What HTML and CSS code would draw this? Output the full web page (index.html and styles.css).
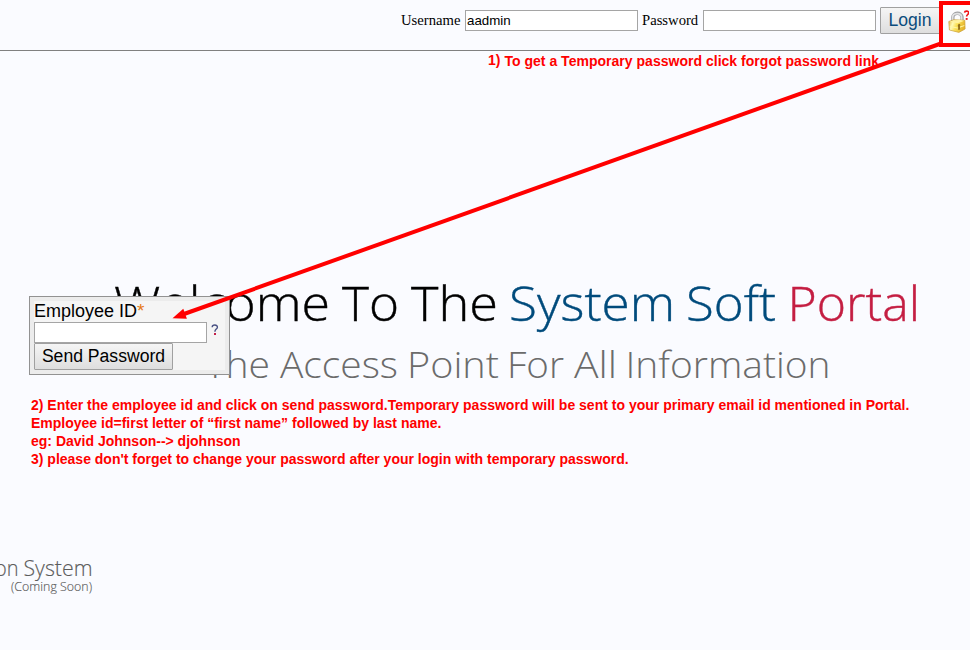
FILE: index.html
```
<!DOCTYPE html>
<html lang="en">
<head>
<meta charset="utf-8">
<title>System Soft Portal</title>
<link rel="stylesheet" href="styles.css">
</head>
<body>
<header class="login-bar">
  <label class="login-label" for="user">Username</label>
  <input class="field" id="user" type="text" value="aadmin">
  <label class="login-label" for="pass">Password</label>
  <input class="field" id="pass" type="password">
  <button class="button login-button">Login</button>
  <a class="forgot" href="#" aria-label="Forgot password">
    <svg width="26" height="38" viewBox="943.5 5 26 38">
      <defs>
        <linearGradient id="gold" x1="0" y1="0" x2="1" y2="0.3">
          <stop offset="0" stop-color="#e3b53a"/><stop offset=".3" stop-color="#fffab8"/>
          <stop offset=".55" stop-color="#fae15a"/><stop offset="1" stop-color="#e6b52c"/>
        </linearGradient>
      </defs>
      <path d="M953.3 21.5v-4c0-5.3 8.8-5.8 9.2-.5v4.5" fill="none" stroke="#a2a3a6" stroke-width="3.4"/>
      <path d="M953.1 21.5v-4c0-4.8 8.6-5.2 9-.5v3.5" fill="none" stroke="#e2e2e4" stroke-width="1.7"/>
      <path d="M949.3 21.5l5-1.8 11 .6.3 8.7-6.2 3.4-9.5-2.4z" fill="url(#gold)" stroke="#c99f38" stroke-width=".7"/>
      <path d="M949.8 21.6l8.5 1.6 6.5-2.4-5-1z" fill="#fff2a0"/>
      <path d="M950.3 26.4l7.5 1.6 7-2.4" fill="none" stroke="#fff7a8" stroke-width="1"/>
      <path d="M958.3 25.6c0-1.8 2.6-2.2 2.5-.2l-.4 1.2.3 2.8-2 .6-.1-3.2z" fill="#94711a"/>
      <path d="M965 12.6c.2-2 4.5-2 4.2.3-.2 1.6-2.1 1.7-2.1 3.6" fill="none" stroke="#f01418" stroke-width="1.6"/>
      <path d="M966.2 18h1.9v1.9h-1.9z" fill="#f01418"/>
    </svg>
  </a>
</header>

<p class="note first-note"><span class="step">1)</span> To get a Temporary password click forgot password link</p>

<main>
  <svg class="banner" width="970" height="120" viewBox="0 270 970 120">
    <g class="title">
      <text x="114" y="321" textLength="216" lengthAdjust="spacingAndGlyphs">Welcome</text>
      <text x="342" y="321" textLength="57" lengthAdjust="spacingAndGlyphs">To</text>
      <text x="411" y="321" textLength="87" lengthAdjust="spacingAndGlyphs">The</text>
      <text class="blue" x="509" y="321" textLength="166" lengthAdjust="spacingAndGlyphs">System</text>
      <text class="blue" x="686" y="321" textLength="90" lengthAdjust="spacingAndGlyphs">Soft</text>
      <text class="red" x="787.5" y="321" textLength="132.5" lengthAdjust="spacingAndGlyphs">Portal</text>
    </g>
    <g class="subtitle">
      <text x="205" y="378" textLength="65" lengthAdjust="spacingAndGlyphs">The</text>
      <text x="280" y="378" textLength="118" lengthAdjust="spacingAndGlyphs">Access</text>
      <text x="407" y="378" textLength="92" lengthAdjust="spacingAndGlyphs">Point</text>
      <text x="507" y="378" textLength="57" lengthAdjust="spacingAndGlyphs">For</text>
      <text x="574" y="378" textLength="43" lengthAdjust="spacingAndGlyphs">All</text>
      <text x="625.5" y="378" textLength="205" lengthAdjust="spacingAndGlyphs">Information</text>
    </g>
  </svg>
  <div class="note instructions">
    <p class="wide-line">2) Enter the employee id and click on send password.Temporary password will be sent to your primary email id mentioned in Portal.</p>
    <p>Employee id=first letter of “first name” followed by last name.</p>
    <p>eg: David Johnson--&gt; djohnson</p>
    <p>3) please don't forget to change your password after your login with temporary password.</p>
  </div>
  <svg class="coming" width="110" height="50" viewBox="0 550 110 50">
    <text class="system" x="-5" y="576" textLength="23.5" lengthAdjust="spacingAndGlyphs">on</text>
    <text class="system" x="23.5" y="576" textLength="69" lengthAdjust="spacingAndGlyphs">System</text>
    <text class="soon" x="11" y="591" textLength="81" lengthAdjust="spacingAndGlyphs">(Coming Soon)</text>
  </svg>
</main>

<section class="popup">
  <div class="popup-body">
    <label class="popup-label" for="emp">Employee ID<span class="required">*</span></label>
    <div class="popup-row">
      <input class="field" id="emp" type="text">
      <svg width="8" height="12" viewBox="0 0 8 12">
        <path d="M1.2 3.2C1.2.3 6.6.3 6.4 3.2 6.3 5.1 3.9 5.2 3.9 7.7" fill="none" stroke="#4a5284" stroke-width="1.4"/>
        <path d="M3 9h2v2H3z" fill="#c41e48"/>
      </svg>
    </div>
    <button class="button send-button">Send Password</button>
  </div>
</section>

<svg class="arrow" width="970" height="340" viewBox="0 0 970 340">
  <path d="M941 43.5L184 314" stroke="#f00" stroke-width="4" fill="none"/>
  <path d="M172.5 318.3l10.8-9.6 3.6 10z" fill="#f00"/>
</svg>
</body>
</html>
```
FILE: styles.css
```
* { box-sizing: border-box; }
body {
  margin: 0;
  width: 970px;
  height: 650px;
  overflow: hidden;
  position: relative;
  background: #fafbff;
  font-family: "Liberation Sans", sans-serif;
}
p { margin: 0; }
.login-bar {
  display: flex;
  height: 51px;
  padding: 1px 0 0 401px;
  border-bottom: 1px solid #808080;
}
.login-label {
  flex: none;
  font: 14.67px/18px "Liberation Serif", serif;
  color: #000;
  width: 60px;
  margin: 10px 4px 0 0;
  white-space: nowrap;
}
.login-label[for="pass"] { width: 57px; }
.field {
  flex: none;
  width: 173px;
  height: 21px;
  margin: 9px 4px 0 0;
  padding: 0 1px;
  border: 1px solid #a5a5a5;
  background: #fff;
  color: #000;
  font: 13.33px "Liberation Sans", sans-serif;
}
.button {
  display: block;
  height: 27px;
  padding: 0;
  border: 1px solid #a0a0a0;
  border-radius: 1px;
  background: linear-gradient(#f5f5f5, #dedede);
  font: 17.6px/23px "Liberation Sans", sans-serif;
  color: #000;
  white-space: nowrap;
}
.login-button {
  flex: none;
  width: 60px;
  margin-top: 6px;
  color: #0b4c7d;
}
.forgot {
  flex: none;
  width: 36px;
  height: 46px;
  margin-left: -1px;
  border: 4px solid #f00;
  background: #fdfdff;
  position: relative;
}
.forgot svg { display: block; }
.note {
  color: #f00;
  font: bold 14px/18px "Liberation Sans", sans-serif;
  white-space: nowrap;
}
.first-note { height: 219px; padding: 1px 0 0 488px; letter-spacing: 0.02px; }
.wide-line { letter-spacing: 0.008px; }
.step { position: relative; top: -1px; }
.banner { display: block; }
.title, .subtitle, .coming { font-family: "Open Sans", sans-serif; font-weight: 300; }
.title { font-size: 48px; fill: #000; stroke: #000; stroke-width: 0.4px; }
.title .blue { fill: #004b7c; stroke: #004b7c; }
.title .red { fill: #c41e42; stroke: #c41e42; }
.subtitle { font-size: 37.5px; fill: #6b6b6b; }
.instructions { height: 160px; padding: 6px 0 0 31px; }
.coming { display: block; fill: #5c5c5c; stroke: #5c5c5c; stroke-width: 0.15px; }
.system { font-size: 22.5px; }
.soon { font-size: 12.5px; }
.popup {
  position: absolute;
  left: 29px;
  top: 296px;
  width: 201px;
  height: 79px;
  padding: 4px;
  border: 1px solid #929292;
  background: #ececec;
}
.popup-body { height: 69px; background: #f5f5f5; }
.popup-label {
  display: block;
  height: 21px;
  font-size: 18px;
  line-height: 20px;
}
.required { color: #e57a17; font-size: 19px; line-height: 1; }
.popup-row { display: flex; height: 21px; }
.popup-row .field { margin: 0 4px 0 0; }
.popup-row svg { margin-top: 2px; }
.send-button { width: 139px; }
.arrow { position: absolute; left: 0; top: 0; pointer-events: none; }
```
